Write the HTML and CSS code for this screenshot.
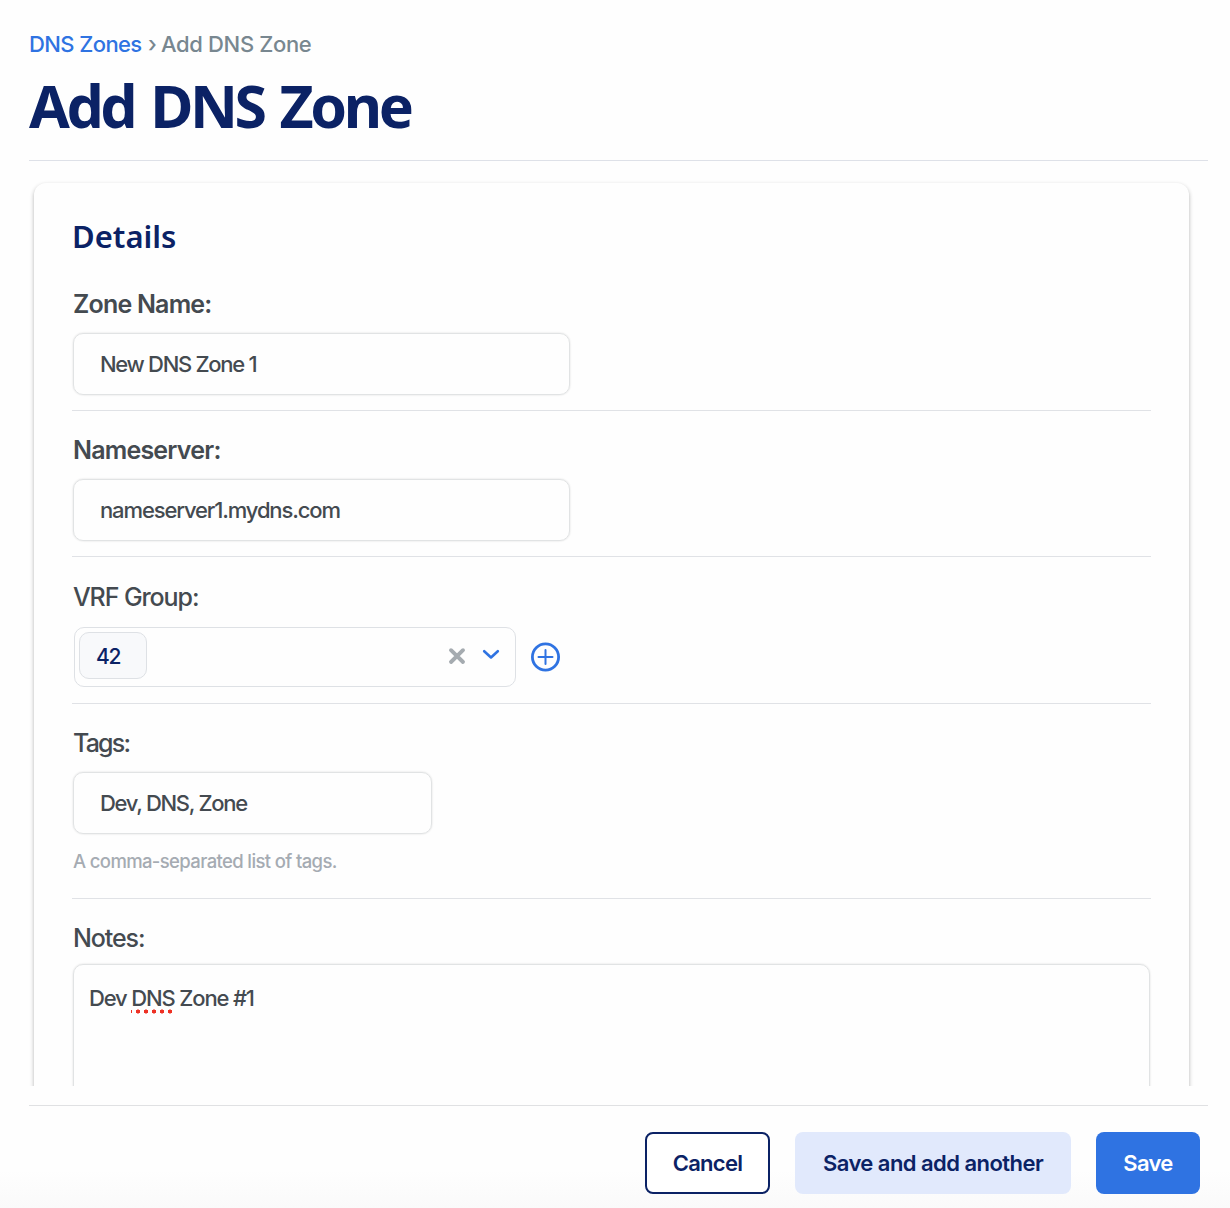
FILE: index.html
```html
<!DOCTYPE html>
<html lang="en">
<head>
<meta charset="utf-8">
<title>Add DNS Zone</title>
<link rel="stylesheet" href="styles.css">
</head>
<body>
<div class="page">
  <header class="page-header">
    <nav class="breadcrumb"><a class="crumb-link" href="#">DNS Zones</a><span class="crumb-sep">›</span><span class="crumb-current">Add DNS Zone</span></nav>
    <h1 class="title"><span>Add DNS Zone</span></h1>
  </header>
  <main class="scroll">
    <form class="card">
      <h2 class="section-title">Details</h2>
      <div class="field">
        <label class="label required zone-label">Zone Name:</label>
        <div class="input zone-input">New DNS Zone 1</div>
      </div>
      <div class="field">
        <label class="label required ns-label">Nameserver:</label>
        <div class="input ns-input">nameserver1.mydns.com</div>
      </div>
      <div class="field field-select">
        <label class="label vrf-label">VRF Group:</label>
        <div class="select-row">
          <div class="select">
            <span class="chip">42</span>
            <svg class="clear" width="18" height="18" viewBox="0 0 18 18"><path d="M3 3.200 15 15M15 3.200 3 15" stroke="#a5abb0" stroke-width="3.900" stroke-linecap="round"/></svg>
            <svg class="chevron" width="18" height="12" viewBox="0 0 18 12"><path d="M2.200 2.200 9 8.500 15.800 2.200" fill="none" stroke="#2f73e2" stroke-width="2.600" stroke-linecap="round" stroke-linejoin="round"/></svg>
          </div>
          <svg class="add" width="30" height="30" viewBox="0 0 30 30" fill="none" stroke="#2f73e2"><circle cx="15.500" cy="15" r="13.100" stroke-width="2.800"/><path d="M15.500 8v14M8.500 15h14" stroke-width="2" stroke-linecap="round"/></svg>
        </div>
      </div>
      <div class="field field-tags">
        <label class="label tags-label">Tags:</label>
        <div class="input input-short tags-input">Dev, DNS, Zone</div>
        <p class="help">A comma-separated list of tags.</p>
      </div>
      <div class="field field-notes">
        <label class="label notes-label">Notes:</label>
        <div class="textarea">Dev <span class="misspelled">DNS</span> Zone #1</div>
      </div>
    </form>
  </main>
  <footer class="actions">
    <button class="btn btn-outline">Cancel</button>
    <button class="btn btn-soft">Save and add another</button>
    <button class="btn btn-primary">Save</button>
  </footer>
</div>
</body>
</html>
```
FILE: styles.css
```css
* { box-sizing: border-box; }
body {
  margin: 0;
  background: #fefefe;
  color: #444a50;
  font-family: Inter, "Liberation Sans", sans-serif;
  font-size: 22px;
  font-weight: 450;
}
.page {
  height: 1208px;
  display: flex;
  flex-direction: column;
  padding: 0 22px 0 29px;
  background: linear-gradient(#fefefe 1170px, #fafafa);
  overflow: hidden;
}
.page-header {
  height: 161px;
  flex: none;
  padding-top: 30px;
  border-bottom: 1px solid #dee1e8;
}
.breadcrumb {
  display: flex;
  height: 29px;
  line-height: 29px;
  color: #788790;
  white-space: nowrap;
}
.crumb-link { width: 113px; color: #2f73e2; text-decoration: none; letter-spacing: -0.6px; }
.crumb-sep { width: 19px; padding-left: 6px; }
.crumb-current { letter-spacing: -0.35px; }
.title {
  margin: 6px 0 0;
  font: 700 59px/80px "Noto Sans", sans-serif;
  letter-spacing: -3.4px;
  word-spacing: 4px;
  color: #0b2265;
  white-space: nowrap;
}
.scroll {
  height: 925px;
  flex: none;
  margin-left: -5px;
  padding: 22px 19px 0 10px;
  overflow: hidden;
}
.card {
  height: 1100px;
  padding: 33px 38px 0;
  border-radius: 12px;
  background: #fefefe;
  box-shadow: 0 2px 4px rgba(0, 0, 0, 0.3);
}
.section-title {
  margin: 0 0 9px;
  font: 600 31px/40px "Noto Sans", sans-serif;
  color: #0b2265;
}
.field {
  height: 146px;
  padding: 24px 0 0 1px;
  border-bottom: 1px solid #e0e2e6;
}
.label {
  display: block;
  height: 30px;
  margin-bottom: 14px;
  font-size: 25px;
  line-height: 30px;
  letter-spacing: -0.8px;
  white-space: nowrap;
}
.required { font-weight: 600; }
.vrf-label { letter-spacing: -1.1px; }
.tags-label { letter-spacing: -1.8px; }
.notes-label { letter-spacing: -1.1px; }
.input, .textarea {
  width: 497px;
  height: 62px;
  border: 1px solid #e1e3e4;
  border-radius: 10px;
  padding: 0 26px;
  line-height: 60px;
  letter-spacing: -1.3px;
  box-shadow: 0 0 2px rgba(0, 0, 0, 0.15);
  white-space: nowrap;
}
.ns-input { letter-spacing: -1.13px; }
.input-short { width: 359px; }
.field-select { height: 147px; padding-top: 25px; }
.field-select .label { margin-bottom: 15px; }
.select-row { display: flex; align-items: center; padding-left: 1px; }
.select {
  width: 442px;
  height: 60px;
  display: flex;
  align-items: center;
  border: 1px solid #dee1e5;
  border-radius: 10px;
  padding: 0 15px 4px 4px;
}
.chip {
  width: 68px;
  height: 47px;
  padding-left: 16px;
  border: 1px solid #dee1e5;
  border-radius: 10px;
  background: #f8f9fb;
  color: #0b2265;
  font-size: 21px;
  font-weight: 500;
  letter-spacing: -1.4px;
  line-height: 47px;
}
.clear { margin: 2px 16px 0 auto; }
.add { margin-left: 14px; }
.field-tags { height: 195px; }
.help {
  margin: 13px 0 0;
  color: #a5abb2;
  font-size: 18.5px;
  line-height: 28px;
  letter-spacing: -0.63px;
  white-space: nowrap;
}
.field-notes { height: 300px; border: 0; }
.field-notes .label { margin-bottom: 11px; }
.textarea { width: 1077px; height: 200px; padding: 3px 15px; letter-spacing: -1.15px; }
.misspelled {
  padding-bottom: 3px;
  background: radial-gradient(circle at 3px 2.5px, #ee3124 1.8px, transparent 2.3px) -4px 100% / 8px 5px repeat-x;
}
.actions {
  height: 103px;
  margin-top: 19px;
  padding: 26px 8px 0;
  display: flex;
  justify-content: flex-end;
  gap: 25px;
  border-top: 1px solid #e0e1e3;
}
.btn {
  height: 62px;
  padding: 0;
  border: 0;
  border-radius: 8px;
  font: 600 22px/62px Inter, sans-serif;
  letter-spacing: -0.7px;
  color: #0b2265;
  white-space: nowrap;
}
.btn-outline { width: 125px; border: 2px solid #0b2265; background: #fff; line-height: 58px; }
.btn-soft { width: 276px; background: #e1e9fc; letter-spacing: -0.55px; }
.btn-primary { width: 104px; background: #2f73e2; color: #fff; }
```
